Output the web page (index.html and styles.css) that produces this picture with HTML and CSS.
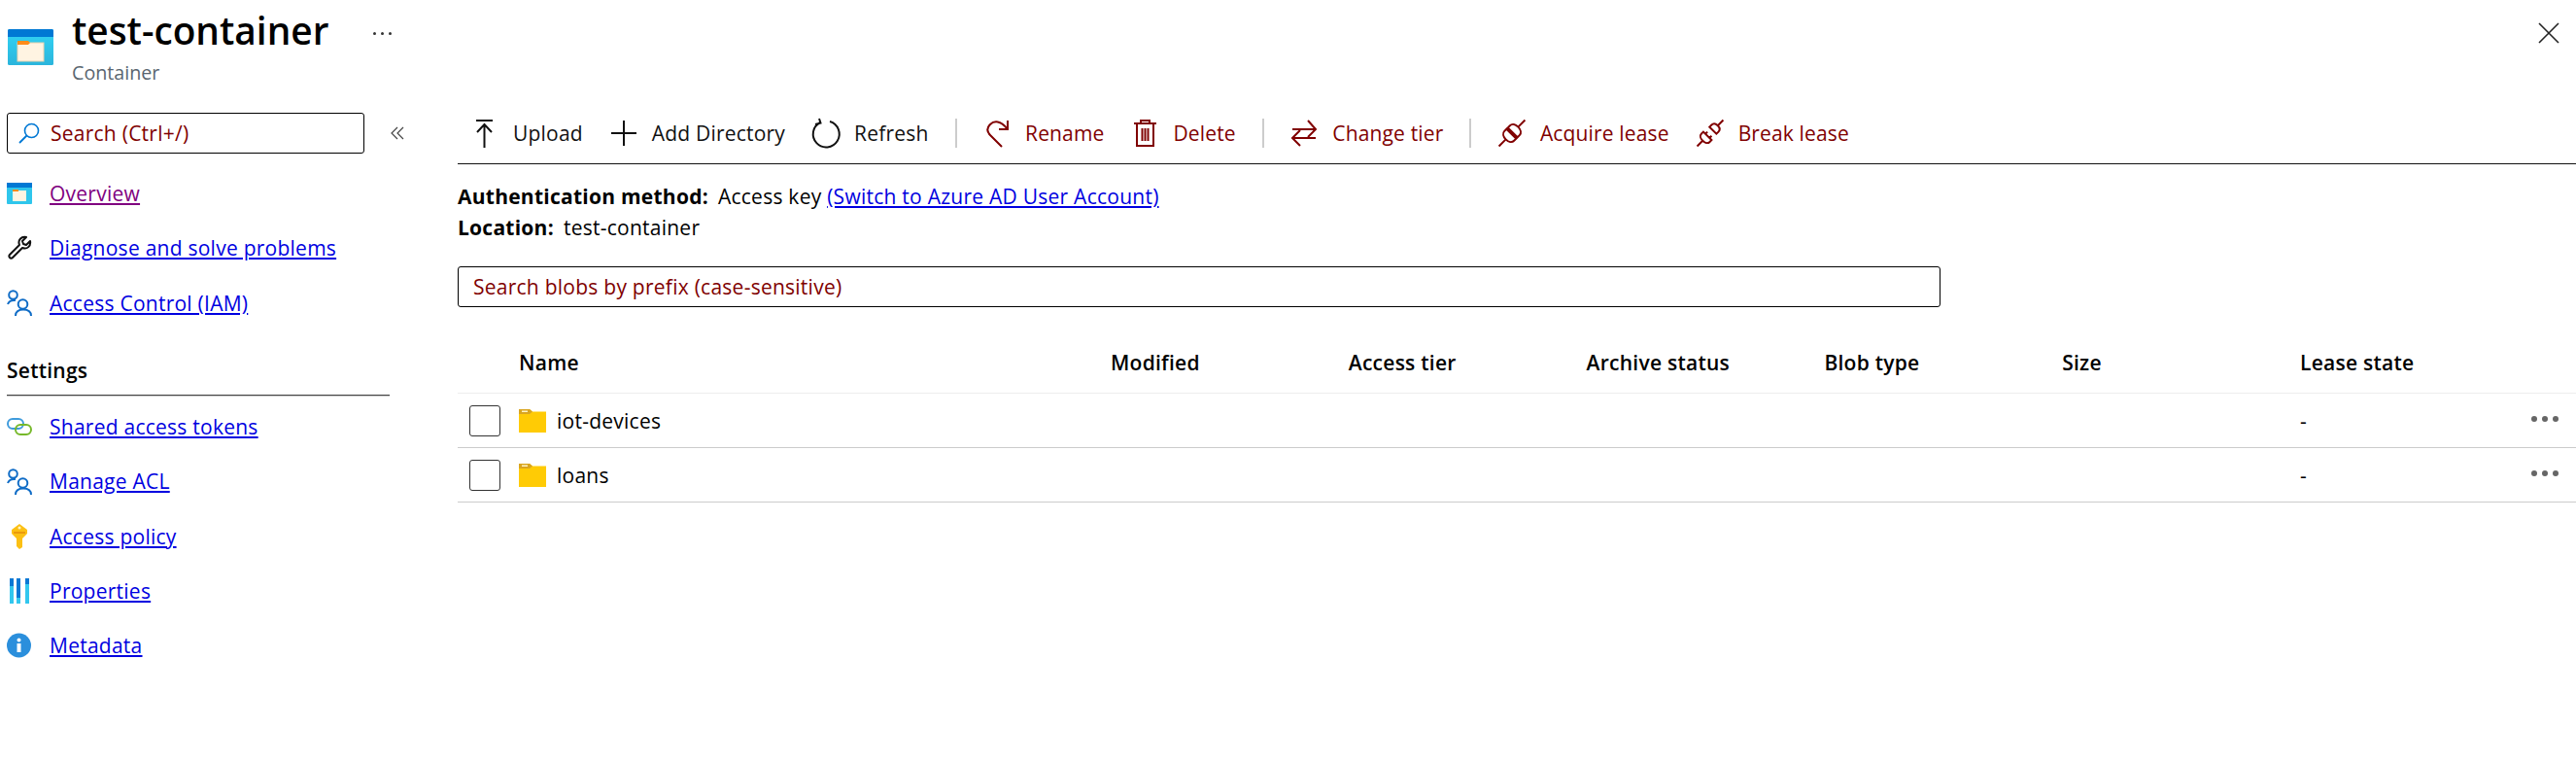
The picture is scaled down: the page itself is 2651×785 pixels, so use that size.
FILE: index.html
```html
<!DOCTYPE html>
<html lang="en">

<head>
    <meta charset="UTF-8">
    <meta name="viewport" content="width=device-width, initial-scale=1.0">
    <title>test-container</title>
    <link rel="stylesheet" href="styles.css">
</head>

<body>
    <header class="header">
        <svg class="header-icon" viewBox="0 0 47 37">
            <defs>
                <linearGradient id="boxFill" x1="0" y1="0" x2="0" y2="1">
                    <stop offset="0" stop-color="#32d4f5" />
                    <stop offset="1" stop-color="#2bb5dc" />
                </linearGradient>
            </defs>
            <rect width="47" height="37" rx="1.5" fill="url(#boxFill)" />
            <path d="M1.5 0H45.5A1.5 1.5 0 0 1 47 1.5V8H0V1.5A1.5 1.5 0 0 1 1.5 0Z" fill="#0078d4" />
            <rect x="10" y="14" width="27" height="19" fill="#fff4e2" stroke="#e8d2b0" />
            <path d="M10 12H21L23 14L21 16H10Z" fill="#ff8c1a" />
        </svg>
        <div class="titles">
            <h1 class="title">test-container</h1>
            <div class="subtitle">Container</div>
        </div>
        <div class="title-more"><i></i><i></i><i></i></div>
        <svg class="close" viewBox="0 0 22 22">
            <path d="M1 1L21 21M21 1L1 21" />
        </svg>
    </header>

    <div class="page">
        <aside class="sidebar">
            <div class="side-search-row">
                <div class="side-search">
                    <svg viewBox="0 0 22 22">
                        <circle cx="13.5" cy="8.5" r="7" fill="none" stroke="#0078d4" stroke-width="1.6" />
                        <path d="M8.5 13.5L1 21" stroke="#0078d4" stroke-width="1.8" />
                    </svg>
                    <span>Search (Ctrl+/)</span>
                </div>
                <svg class="collapse" viewBox="0 0 14 14">
                    <path d="M7 1L1 7L7 13M13 1L7 7L13 13" />
                </svg>
            </div>

            <nav class="nav">
                <div class="nav-item">
                    <svg viewBox="0 0 26 22">
                        <rect width="26" height="22" rx="1" fill="#2fc6ec" />
                        <rect width="26" height="5" fill="#0078d4" />
                        <rect x="6" y="8" width="14" height="11" fill="#fff4e2" />
                        <rect x="6" y="7" width="6" height="2" fill="#ff8c1a" />
                    </svg>
                    <a class="visited" href="#">Overview</a>
                </div>
                <div class="nav-item">
                    <svg viewBox="0 0 26 26">
                        <path d="M3 20L13 10C11 5 15 1 20 2L16 6L17 9L20 10L24 6C25 11 21 15 16 13L6 23C4 25 1 22 3 20Z" fill="none" stroke="#111" stroke-width="2" stroke-linejoin="round" />
                    </svg>
                    <a href="#">Diagnose and solve problems</a>
                </div>
                <div class="nav-item">
                    <svg viewBox="0 0 26 27">
                        <g fill="none" stroke="#0f6cc6" stroke-width="2">
                            <circle cx="6.5" cy="5.500" r="4.300" />
                            <circle cx="16.500" cy="15" r="4.800" />
                            <path d="M1 15C2 12 5 10.500 9 11M9 27C9 23 12 20.500 17 20.500C22 20.500 25 23 25 27" />
                        </g>
                    </svg>
                    <a href="#">Access Control (IAM)</a>
                </div>
            </nav>

            <div class="nav-title">Settings</div>

            <nav class="nav">
                <div class="nav-item">
                    <svg viewBox="0 0 26 18">
                        <rect x="1" y="1" width="16" height="10" rx="5" fill="none" stroke="#3f9bdc" stroke-width="2" />
                        <rect x="9" y="7" width="16" height="10" rx="5" fill="none" stroke="#76b82a" stroke-width="2" />
                    </svg>
                    <a href="#">Shared access tokens</a>
                </div>
                <div class="nav-item">
                    <svg viewBox="0 0 26 27">
                        <g fill="none" stroke="#0f6cc6" stroke-width="2">
                            <circle cx="6.5" cy="5.500" r="4.300" />
                            <circle cx="16.500" cy="15" r="4.800" />
                            <path d="M1 15C2 12 5 10.500 9 11M9 27C9 23 12 20.500 17 20.500C22 20.500 25 23 25 27" />
                        </g>
                    </svg>
                    <a href="#">Manage ACL</a>
                </div>
                <div class="nav-item">
                    <svg viewBox="0 0 26 26">
                        <path d="M13 0L21 6V10L16 15V24L13 26L10 23V15L5 10V6Z" fill="#fcc014" />
                        <rect x="7" y="8" width="12" height="2" fill="#ea9a0c" />
                        <circle cx="13" cy="4" r="1.500" fill="#fff2c0" />
                    </svg>
                    <a href="#">Access policy</a>
                </div>
                <div class="nav-item">
                    <svg viewBox="0 0 26 26">
                        <rect x="3" y="0" width="4" height="26" fill="#32c7ee" />
                        <rect x="10" y="0" width="4" height="26" fill="#32c7ee" />
                        <rect x="19" y="0" width="4" height="26" fill="#32c7ee" />
                        <rect x="3" y="0" width="4" height="8" fill="#0a78d4" />
                        <rect x="10" y="0" width="4" height="20" fill="#0a78d4" />
                        <rect x="19" y="0" width="4" height="6" fill="#0a78d4" />
                    </svg>
                    <a href="#">Properties</a>
                </div>
                <div class="nav-item">
                    <svg viewBox="0 0 26 26">
                        <circle cx="12.500" cy="13" r="12.500" fill="#2b8fdc" />
                        <rect x="10.500" y="11" width="4" height="9" fill="#fff" />
                        <circle cx="12.500" cy="7.500" r="2" fill="#fff" />
                    </svg>
                    <a href="#">Metadata</a>
                </div>
            </nav>
        </aside>

        <main class="main">
            <div class="toolbar">
                <button class="tool">
                    <span class="tool-icon"><svg width="18" height="29" viewBox="0 0 18 29"><path d="M0 1H17M8.500 29V5M1 13L8.500 5L16 13" /></svg></span>
                    Upload
                </button>
                <button class="tool">
                    <span class="tool-icon"><svg width="26" height="26" viewBox="0 0 26 26"><path d="M13 0V26M0 13H26" /></svg></span>
                    Add Directory
                </button>
                <button class="tool">
                    <span class="tool-icon"><svg width="30" height="30" viewBox="0 0 30 30"><path d="M9 4A13.500 13.500 0 1 0 19 3M8 0L9.500 4.500L4 6" /></svg></span>
                    Refresh
                </button>
                <span class="sep"></span>
                <button class="tool action">
                    <span class="tool-icon"><svg width="23" height="29" viewBox="0 0 23 29"><path d="M22 1V10H13M21 9C15 1 8 1 4 5C0 9 1 13 4 16L16 28" /></svg></span>
                    Rename
                </button>
                <button class="tool action">
                    <span class="tool-icon"><svg width="23" height="28" viewBox="0 0 23 28"><path d="M0 4H23M7 4V1H16V4M3 4V27H20V4M8.500 9V22M11.500 9V22M14.500 9V22" /></svg></span>
                    Delete
                </button>
                <span class="sep"></span>
                <button class="tool action">
                    <span class="tool-icon"><svg width="26" height="28" viewBox="0 0 26 28"><path d="M1 10H25M17 1L25 10L17 18M25 19H1M9 11L1 19L9 27" /></svg></span>
                    Change tier
                </button>
                <span class="sep"></span>
                <button class="tool action">
                    <span class="tool-icon"><svg width="28" height="28" viewBox="0 0 28 28"><g transform="rotate(-45 14 14)"><path d="M-5 14H5M23 14H33M13 7H10C7 7 5 10 5 14C5 18 7 21 10 21H13ZM15 7H18C21 7 23 10 23 14C23 18 21 21 18 21H15Z" /></g></svg></span>
                    Acquire lease
                </button>
                <button class="tool action">
                    <span class="tool-icon"><svg width="28" height="28" viewBox="0 0 28 28"><g transform="rotate(-45 14 14)"><path d="M-5 14H3M25 14H33M10 8H7C4.500 8 3 11 3 14C3 17 4.500 20 7 20H10ZM10 11H13M10 17H13M18 9H21C23.500 9 25 11 25 14C25 17 23.500 19 21 19H18Z" /></g></svg></span>
                    Break lease
                </button>
            </div>

            <div class="info">
                <div><b>Authentication method:</b><span class="val">Access key</span> <a href="#">(Switch to Azure AD User Account)</a></div>
                <div><b>Location:</b><span class="val">test-container</span></div>
            </div>

            <div class="blob-search">Search blobs by prefix (case-sensitive)</div>

            <div class="table">
                <div class="row head">
                    <span></span>
                    <span>Name</span>
                    <span>Modified</span>
                    <span>Access tier</span>
                    <span>Archive status</span>
                    <span>Blob type</span>
                    <span>Size</span>
                    <span>Lease state</span>
                    <span></span>
                </div>
                <div class="row">
                    <span class="check"></span>
                    <span class="name">
                        <svg viewBox="0 0 28 24">
                            <path d="M0 0H11L14 2.500H28V24H0Z" fill="#ffcb05" />
                            <path d="M0 0H11L14 2.500L11 5H0Z" fill="#d9a520" />
                            <rect x="3" y="1.500" width="6" height="1.500" fill="#fff3c4" />
                        </svg>
                        iot-devices
                    </span>
                    <span></span><span></span><span></span><span></span><span></span>
                    <span>-</span>
                    <span class="more"><i></i><i></i><i></i></span>
                </div>
                <div class="row">
                    <span class="check"></span>
                    <span class="name">
                        <svg viewBox="0 0 28 24">
                            <path d="M0 0H11L14 2.500H28V24H0Z" fill="#ffcb05" />
                            <path d="M0 0H11L14 2.500L11 5H0Z" fill="#d9a520" />
                            <rect x="3" y="1.500" width="6" height="1.500" fill="#fff3c4" />
                        </svg>
                        loans
                    </span>
                    <span></span><span></span><span></span><span></span><span></span>
                    <span>-</span>
                    <span class="more"><i></i><i></i><i></i></span>
                </div>
            </div>
        </main>
    </div>
</body>

</html>
```
FILE: styles.css
```css
* {
    margin: 0;
    padding: 0;
    box-sizing: border-box;
}

html,
body {
    height: 100%;
}

body {
    background: #fff;
    color: #000;
    font-family: "Open Sans", "Noto Sans", sans-serif;
    font-size: 21px;
    letter-spacing: 0.25px;
    overflow: hidden;
}

a {
    color: #0000e0;
}

/* Header */
.header {
    display: flex;
    height: 104px;
    padding: 0 17px 0 8px;
}

.header-icon {
    width: 47px;
    height: 37px;
    margin-top: 30px;
}

.titles {
    margin-left: 19px;
}

.title {
    font-size: 38.8px;
    font-weight: 600;
    line-height: 44px;
    letter-spacing: 0;
    margin-top: 9px;
}

.subtitle {
    color: #5a6670;
    font-size: 19.7px;
    letter-spacing: 0;
    line-height: 26px;
    margin-top: 9px;
}

.title-more {
    display: flex;
    gap: 5px;
    margin: 33px 0 0 46px;
}

.title-more i {
    width: 3px;
    height: 3px;
    background: #333;
    border-radius: 50%;
}

.close {
    width: 22px;
    height: 22px;
    margin: 23px 0 0 auto;
    fill: none;
    stroke: #222;
    stroke-width: 1.6;
}

.page {
    display: flex;
    margin-top: 2px;
}

/* Left menu */
.sidebar {
    width: 471px;
    flex: none;
    padding-left: 7px;
}

.side-search-row {
    display: flex;
    align-items: center;
    height: 42px;
    margin-top: 10px;
}

.side-search {
    display: flex;
    align-items: center;
    width: 368px;
    height: 42px;
    padding-left: 11px;
    border: 1px solid #000;
    border-radius: 3px;
    color: #7f0000;
}

.side-search svg {
    width: 22px;
    height: 22px;
    margin-right: 11px;
}

.collapse {
    width: 14px;
    height: 14px;
    margin-left: 27px;
    fill: none;
    stroke: #444;
    stroke-width: 1.2;
}

.nav {
    display: flex;
    flex-direction: column;
}

.nav-item {
    display: flex;
    align-items: center;
    height: 56.3px;
}

.nav-item svg {
    width: 26px;
    max-height: 27px;
    margin-right: 18px;
    flex: none;
}

.nav-item a.visited {
    color: #800080;
}

.side-search-row + .nav {
    margin-top: 13px;
}

.nav-title {
    width: 394px;
    margin-top: 28px;
    padding-bottom: 11px;
    border-bottom: 1px solid #444;
    box-shadow: 0 1px #ccc;
    font-weight: 600;
    line-height: 27px;
}

.nav-title + .nav {
    margin-top: 4px;
}

/* Command bar */
.toolbar {
    display: flex;
    align-items: center;
    height: 63px;
    padding-left: 13px;
    border-bottom: 1px solid #111;
    letter-spacing: 0.2px;
}

.tool {
    display: flex;
    align-items: center;
    gap: 14px;
    height: 30px;
    margin-right: 27px;
    background: none;
    border: 0;
    font: inherit;
    letter-spacing: inherit;
    color: #111;
    white-space: nowrap;
}

.tool-icon {
    display: flex;
    align-items: center;
    justify-content: center;
    width: 30px;
    height: 30px;
    flex: none;
}

.tool svg {
    fill: none;
    stroke: currentColor;
    stroke-width: 2;
    overflow: visible;
}

.tool.action {
    color: #800000;
    letter-spacing: 0.15px;
}

.sep {
    width: 2px;
    height: 30px;
    margin-right: 26.5px;
    background: #ccc;
    flex: none;
}

/* Info */
.main {
    flex: 1;
    min-width: 0;
}

.info {
    margin-top: 17px;
    line-height: 32px;
}

.info b {
    font-weight: 700;
}

.val {
    margin-left: 10px;
}

.blob-search {
    display: flex;
    align-items: center;
    width: 1526px;
    height: 42px;
    margin-top: 24px;
    padding-left: 15px;
    border: 1px solid #000;
    border-radius: 3px;
    color: #7f0000;
}

/* Blob list */
.table {
    margin-top: 26px;
}

.row {
    display: grid;
    grid-template-columns: 63px 609px repeat(5, 244.8px) 1fr 46px;
    align-items: center;
    height: 56px;
    border-bottom: 1px solid #ccc;
}

.row.head {
    height: 63px;
    border-bottom-color: #eee;
    font-weight: 600;
}

.check {
    width: 32px;
    height: 32px;
    margin-left: 12px;
    border: 1px solid #333;
    border-radius: 3px;
}

.name {
    display: flex;
    align-items: center;
    gap: 11px;
}

.name svg {
    width: 28px;
    height: 24px;
}

.more {
    display: flex;
    gap: 5px;
    margin-bottom: 4px;
}

.more i {
    width: 6px;
    height: 6px;
    background: #666;
    border-radius: 50%;
}
```
